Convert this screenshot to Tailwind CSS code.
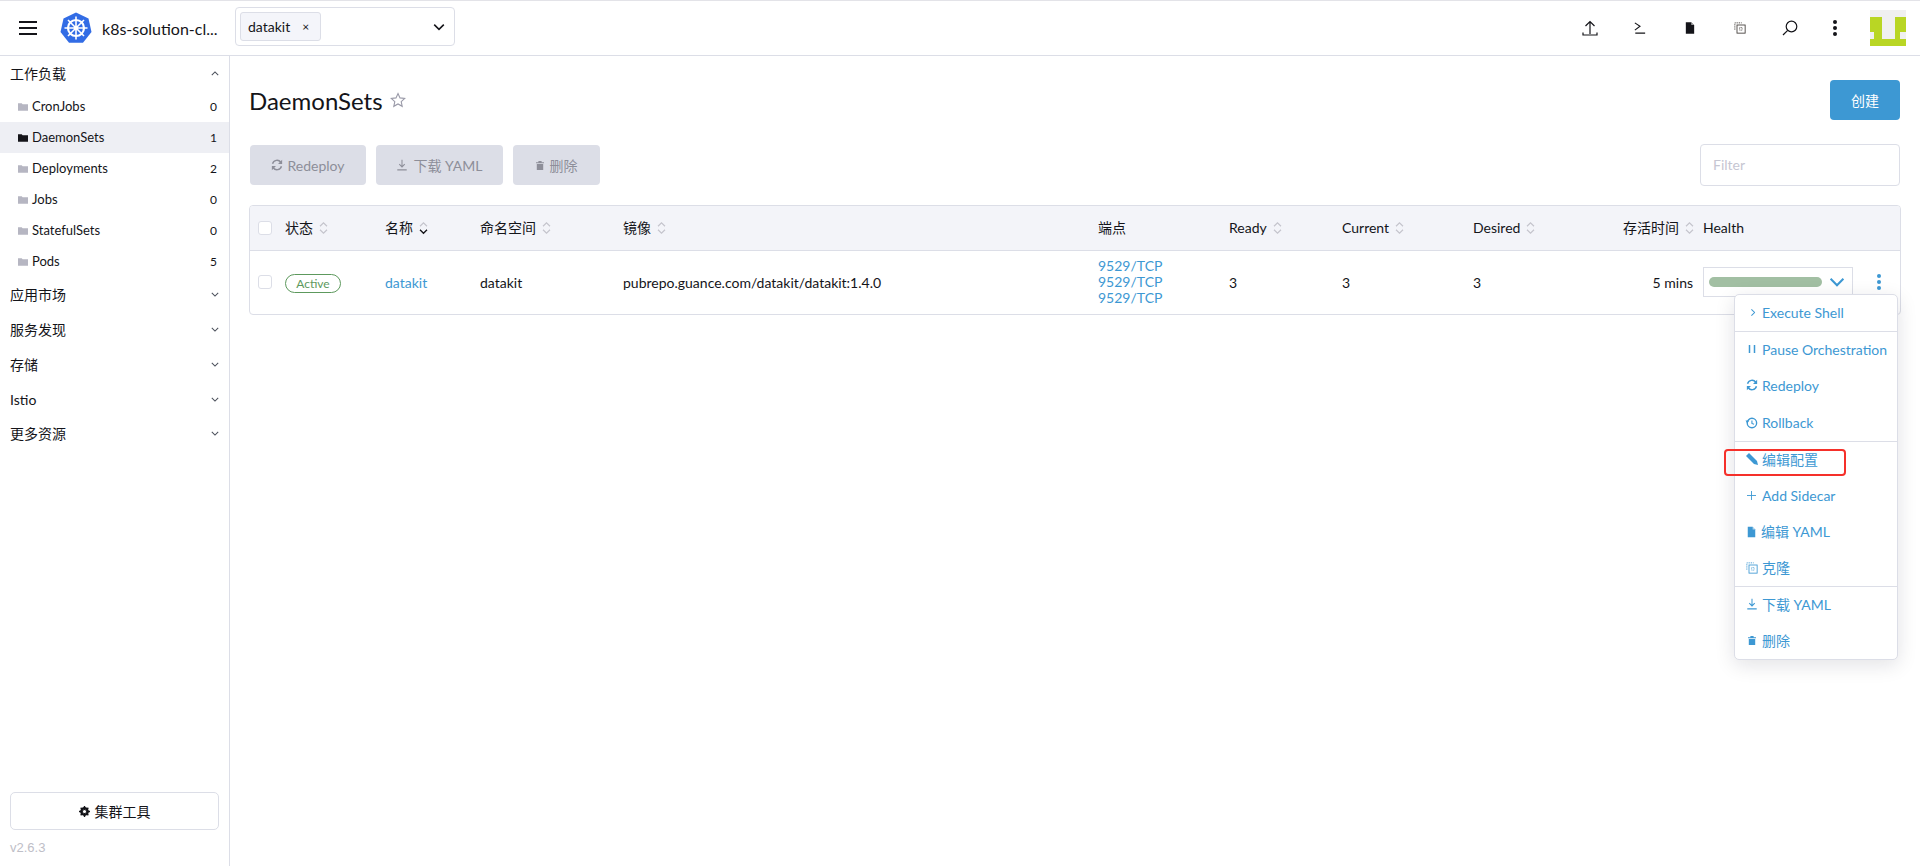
<!DOCTYPE html>
<html lang="en">
  <head>
    <meta charset="UTF-8" />
    <title>DaemonSets | Rancher</title>
    <script src="https://cdn.jsdelivr.net/npm/@tailwindcss/browser@4"></script>
  </head>
  <body class="relative w-[1920px] h-[866px] overflow-hidden bg-white text-[14px] leading-[21px] text-[#141419] font-['Lato','Noto_Sans_CJK_SC',sans-serif]">
    <svg class="hidden">
      <symbol id="sort" viewBox="0 0 10 16"><path d="M1 6l4-4 4 4M1 10l4 4 4-4" fill="none" stroke="currentColor" stroke-width="1.300"/></symbol>
      <symbol id="sort-down" viewBox="0 0 10 16"><path d="M1 6l4-4 4 4" fill="none" stroke="#c4c4cc" stroke-width="1.300"/><path d="M1 10l4 4 4-4" fill="none" stroke="#141419" stroke-width="1.500"/></symbol>
      <symbol id="folder" viewBox="0 0 12 10"><path d="M0 1h4.500l1 1.300H12V10H0z" fill="currentColor"/></symbol>
      <symbol id="chev-down" viewBox="0 0 10 6"><path d="M1 1l4 4 4-4" fill="none" stroke="currentColor" stroke-width="1.300"/></symbol>
      <symbol id="refresh" viewBox="0 0 14 14"><path d="M1.800 5.500A5.400 5.400 0 0 1 11.400 3.800M12.200 8.500A5.400 5.400 0 0 1 2.600 10.200" fill="none" stroke="currentColor" stroke-width="1.700"/><path d="M13 .8v5H8.200zM1 13.200v-5h4.800z" fill="currentColor"/></symbol>
      <symbol id="download" viewBox="0 0 14 14"><path d="M7 1v8M3.800 6L7 9.300 10.200 6M1.500 12.700h11" fill="none" stroke="currentColor" stroke-width="1.200"/></symbol>
      <symbol id="trash" viewBox="0 0 10 11"><path d="M0 1.500h10v1.300H0zM3 0h4v1.500H3zM1 3.500h8V11H1z" fill="currentColor"/></symbol>
      <symbol id="copy" viewBox="0 0 14 14"><path d="M1 9V1h8" fill="none" stroke="currentColor" stroke-width="1" stroke-dasharray="1.500 1"/><rect x="3.500" y="3.500" width="9.500" height="9.500" fill="none" stroke="currentColor" stroke-width="1"/><rect x="6.500" y="6.500" width="3" height="3" fill="none" stroke="currentColor" stroke-width="1" stroke-dasharray="1 1"/></symbol>
      <symbol id="file" viewBox="0 0 12 14"><path d="M1 0h6.500L11 3.500V14H1z" fill="currentColor"/><path d="M7.500 0v3.500H11" fill="#fff" fill-opacity=".6"/></symbol>
    </svg>

    <div class="h-[1px] bg-[#e3e3e8]"></div>
    <header class="flex items-center h-[55px] border-b border-[#dcdee7]">
      <div class="w-[60px] pl-[19px] flex flex-col gap-[4px]">
        <span class="w-[18px] h-[2px] bg-[#141419]"></span>
        <span class="w-[18px] h-[2px] bg-[#141419]"></span>
        <span class="w-[18px] h-[2px] bg-[#141419]"></span>
      </div>
      <svg class="w-[32px] h-[32px]" viewBox="0 0 32 32">
        <path d="M16 .500l12.500 6 3 13.500-8.500 10.800H9L.5 20l3-13.500z" fill="#326ce5"/>
        <g fill="none" stroke="#fff">
          <circle cx="16" cy="16" r="8" stroke-width="2.200"/>
          <circle cx="16" cy="16" r="1.800" fill="#fff"/>
          <path d="M16 4.500v23M4.500 16h23M8 8l16 16M24 8L8 24" stroke-width="1.600"/>
        </g>
      </svg>
      <div class="w-[143px] pl-[10px] text-[16px] whitespace-nowrap">k8s-solution-cl...</div>
      <div class="flex items-center justify-between self-start mt-[6px] w-[220px] h-[39px] px-[4px] border border-[#dcdee7] rounded-[4px]">
        <span class="flex items-center w-[81px] h-[29px] pl-[7px] gap-[12px] bg-[#f4f5fa] border border-[#dcdee7] rounded-[3px]">datakit <span class="text-[12px]">×</span></span>
        <svg class="w-[12px] h-[8px] mr-[5px] text-[#141419]"><use href="#chev-down"/></svg>
      </div>
      <div class="flex items-center ml-auto">
        <div class="flex items-center justify-center w-[50px]">
          <svg class="w-[16px] h-[16px]" viewBox="0 0 16 16"><path d="M8 14V2M3.500 6L8 1.500 12.500 6M1 12.500v2.500h14v-2.500" fill="none" stroke="#141419" stroke-width="1.200"/></svg>
        </div>
        <div class="flex items-center justify-center w-[50px]">
          <svg class="w-[12px] h-[12px]" viewBox="0 0 14 14"><path d="M1 1l6 4-6 4.500M1.500 13H13" fill="none" stroke="#141419" stroke-width="1.300"/></svg>
        </div>
        <div class="flex items-center justify-center w-[50px]">
          <svg class="w-[10px] h-[12px] text-[#141419]"><use href="#file"/></svg>
        </div>
        <div class="flex items-center justify-center w-[50px]">
          <svg class="w-[12px] h-[12px] text-[#3f3a36]"><use href="#copy"/></svg>
        </div>
        <div class="flex items-center justify-center w-[50px]">
          <svg class="w-[16px] h-[16px]" viewBox="0 0 16 16"><circle cx="9.500" cy="6.500" r="5.300" fill="none" stroke="#141419" stroke-width="1.200"/><path d="M5.700 10.300L1 15" stroke="#141419" stroke-width="1.200"/></svg>
        </div>
        <div class="flex flex-col items-center gap-[2px] w-[40px]">
          <span class="w-[4px] h-[4px] rounded-full bg-[#141419]"></span>
          <span class="w-[4px] h-[4px] rounded-full bg-[#141419]"></span>
          <span class="w-[4px] h-[4px] rounded-full bg-[#141419]"></span>
        </div>
        <svg class="w-[36px] h-[36px] ml-[15px] mr-[14px]" viewBox="0 0 36 36">
          <rect width="36" height="36" fill="#f0f0f0"/>
          <rect y="7" width="36" height="29" fill="#b9d624"/>
          <rect x="12" y="7" width="13" height="22" fill="#f0f0f0"/>
          <rect y="22" width="4" height="7" fill="#f0f0f0"/>
          <rect x="30" y="22" width="6" height="7" fill="#f0f0f0"/>
        </svg>
      </div>
    </header>

    <div class="flex h-[810px]">
      <aside class="flex flex-col w-[230px] border-r border-[#dcdee7]">
        <div class="flex items-center justify-between h-[35px] px-[10px]">
          <span>工作负载</span>
          <svg class="w-[8px] h-[5px] rotate-180 text-[#4a4f5a]"><use href="#chev-down"/></svg>
        </div>
        <ul class="text-[13px]">
          <li class="flex items-center h-[31px] pl-[18px] pr-[12px]"><svg class="w-[10px] h-[9px] mr-[4px] text-[#b6b6c2]"><use href="#folder"/></svg>CronJobs<span class="ml-auto text-[12px]">0</span></li>
          <li class="flex items-center h-[31px] pl-[18px] pr-[12px] bg-[#eeeff4]"><svg class="w-[10px] h-[9px] mr-[4px] text-[#141419]"><use href="#folder"/></svg>DaemonSets<span class="ml-auto text-[12px]">1</span></li>
          <li class="flex items-center h-[31px] pl-[18px] pr-[12px]"><svg class="w-[10px] h-[9px] mr-[4px] text-[#b6b6c2]"><use href="#folder"/></svg>Deployments<span class="ml-auto text-[12px]">2</span></li>
          <li class="flex items-center h-[31px] pl-[18px] pr-[12px]"><svg class="w-[10px] h-[9px] mr-[4px] text-[#b6b6c2]"><use href="#folder"/></svg>Jobs<span class="ml-auto text-[12px]">0</span></li>
          <li class="flex items-center h-[31px] pl-[18px] pr-[12px]"><svg class="w-[10px] h-[9px] mr-[4px] text-[#b6b6c2]"><use href="#folder"/></svg>StatefulSets<span class="ml-auto text-[12px]">0</span></li>
          <li class="flex items-center h-[31px] pl-[18px] pr-[12px]"><svg class="w-[10px] h-[9px] mr-[4px] text-[#b6b6c2]"><use href="#folder"/></svg>Pods<span class="ml-auto text-[12px]">5</span></li>
        </ul>
        <div class="flex items-center justify-between h-[35px] px-[10px]"><span>应用市场</span><svg class="w-[8px] h-[5px] text-[#4a4f5a]"><use href="#chev-down"/></svg></div>
        <div class="flex items-center justify-between h-[35px] px-[10px]"><span>服务发现</span><svg class="w-[8px] h-[5px] text-[#4a4f5a]"><use href="#chev-down"/></svg></div>
        <div class="flex items-center justify-between h-[35px] px-[10px]"><span>存储</span><svg class="w-[8px] h-[5px] text-[#4a4f5a]"><use href="#chev-down"/></svg></div>
        <div class="flex items-center justify-between h-[35px] px-[10px]"><span>Istio</span><svg class="w-[8px] h-[5px] text-[#4a4f5a]"><use href="#chev-down"/></svg></div>
        <div class="flex items-center justify-between h-[33px] px-[10px]"><span>更多资源</span><svg class="w-[8px] h-[5px] text-[#4a4f5a]"><use href="#chev-down"/></svg></div>
        <div class="mt-auto px-[10px] pb-[8px]">
          <div class="flex items-center justify-center gap-[5px] h-[38px] border border-[#dcdee7] rounded-[5px]">
            <svg class="w-[11px] h-[11px]" viewBox="0 0 12 12"><circle cx="6" cy="6" r="3.600" fill="none" stroke="#141419" stroke-width="2.400"/><path d="M6 0v12M0 6h12M1.800 1.800l8.400 8.400M10.200 1.800l-8.400 8.400" stroke="#141419" stroke-width="1.500"/><circle cx="6" cy="6" r="1.700" fill="#fff"/></svg>
            <span>集群工具</span>
          </div>
          <div class="mt-[8px] text-[13px] leading-[20px] text-[#bebec7] font-['Liberation_Sans',sans-serif]">v2.6.3</div>
        </div>
      </aside>

      <main class="flex-1 pl-[19px] pr-[19px] pt-[24px]">
        <div class="flex items-start justify-between h-[64px]">
          <div class="flex items-center gap-[7px] h-[40px]">
            <h1 class="text-[24px] font-normal">DaemonSets</h1>
            <svg class="w-[16px] h-[16px]" viewBox="0 0 16 16"><path d="M8 1.500l2 4.400 4.700.5-3.500 3.200 1 4.700L8 11.900l-4.200 2.400 1-4.700L1.300 6.400 6 5.900z" fill="none" stroke="#9a9aa8" stroke-width="1.100"/></svg>
          </div>
          <div class="flex items-center justify-center w-[70px] h-[40px] mr-[1px] bg-[#3d98d3] text-white rounded-[4px]">创建</div>
        </div>
        <div class="flex items-center justify-between h-[42px]">
          <div class="flex gap-[10px] ml-[1px] text-[#8d8e99]">
            <div class="flex items-center justify-center gap-[4px] w-[116px] h-[40px] bg-[#dcdee7] rounded-[4px]"><svg class="w-[12px] h-[12px]"><use href="#refresh"/></svg>Redeploy</div>
            <div class="flex items-center justify-center gap-[5px] w-[127px] h-[40px] bg-[#dcdee7] rounded-[4px]"><svg class="w-[12px] h-[12px]"><use href="#download"/></svg>下载 YAML</div>
            <div class="flex items-center justify-center gap-[6px] w-[87px] h-[40px] bg-[#dcdee7] rounded-[4px]"><svg class="w-[8px] h-[9px]"><use href="#trash"/></svg>删除</div>
          </div>
          <div class="flex items-center w-[200px] h-[42px] mr-[1px] pl-[12px] pb-[2px] border border-[#dcdee7] rounded-[4px] text-[#c6c6d2]">Filter</div>
        </div>

        <div class="mt-[19px] w-[1652px] border border-[#dcdee7] rounded-[4px] overflow-hidden">
          <table class="w-full table-fixed border-collapse">
            <colgroup>
              <col class="w-[35px]" /><col class="w-[100px]" /><col class="w-[95px]" /><col class="w-[143px]" /><col class="w-[475px]" /><col class="w-[131px]" /><col class="w-[113px]" /><col class="w-[131px]" /><col class="w-[104px]" /><col class="w-[126px]" /><col />
            </colgroup>
            <thead class="bg-[#f3f4f9]">
              <tr class="h-[44px] text-left border-b border-[#dcdee7]">
                <th class="pl-[8px] font-normal"><span class="block w-[14px] h-[14px] bg-white border border-[#dcdee7] rounded-[3px]"></span></th>
                <th class="font-normal"><span class="flex items-center gap-[6px]">状态<svg class="w-[9px] h-[14px] text-[#c4c4cc]"><use href="#sort"/></svg></span></th>
                <th class="font-normal"><span class="flex items-center gap-[6px]">名称<svg class="w-[9px] h-[14px]"><use href="#sort-down"/></svg></span></th>
                <th class="font-normal"><span class="flex items-center gap-[6px]">命名空间<svg class="w-[9px] h-[14px] text-[#c4c4cc]"><use href="#sort"/></svg></span></th>
                <th class="font-normal"><span class="flex items-center gap-[6px]">镜像<svg class="w-[9px] h-[14px] text-[#c4c4cc]"><use href="#sort"/></svg></span></th>
                <th class="font-normal">端点</th>
                <th class="font-normal"><span class="flex items-center gap-[6px]">Ready<svg class="w-[9px] h-[14px] text-[#c4c4cc]"><use href="#sort"/></svg></span></th>
                <th class="font-normal"><span class="flex items-center gap-[6px]">Current<svg class="w-[9px] h-[14px] text-[#c4c4cc]"><use href="#sort"/></svg></span></th>
                <th class="font-normal"><span class="flex items-center gap-[6px]">Desired<svg class="w-[9px] h-[14px] text-[#c4c4cc]"><use href="#sort"/></svg></span></th>
                <th class="font-normal"><span class="flex items-center justify-end gap-[6px] pr-[9px]">存活时间<svg class="w-[9px] h-[14px] text-[#c4c4cc]"><use href="#sort"/></svg></span></th>
                <th class="font-normal">Health</th>
              </tr>
            </thead>
            <tbody>
              <tr class="h-[64px]">
                <td class="pl-[8px]"><span class="block w-[14px] h-[14px] border border-[#dcdee7] rounded-[3px]"></span></td>
                <td><span class="inline-flex items-center justify-center w-[56px] h-[19px] border border-[#5d995d] rounded-full text-[12px] text-[#5d995d]">Active</span></td>
                <td class="text-[#3d98d3]">datakit</td>
                <td>datakit</td>
                <td>pubrepo.guance.com/datakit/datakit:1.4.0</td>
                <td class="text-[#3d98d3] leading-[16px]">9529/TCP<br />9529/TCP<br />9529/TCP</td>
                <td>3</td>
                <td>3</td>
                <td>3</td>
                <td class="text-right pr-[10px]">5 mins</td>
                <td>
                  <div class="flex items-center">
                    <div class="flex items-center w-[150px] h-[30px] pl-[5px] border border-[#dcdee7]">
                      <span class="w-[113px] h-[10px] bg-[#a2bfa3] rounded-full"></span>
                      <svg class="w-[16px] h-[10px] ml-[7px] text-[#3d98d3]"><use href="#chev-down"/></svg>
                    </div>
                    <div class="flex flex-col items-center gap-[2px] ml-[24px]">
                      <span class="w-[4px] h-[4px] rounded-full bg-[#3d98d3]"></span>
                      <span class="w-[4px] h-[4px] rounded-full bg-[#3d98d3]"></span>
                      <span class="w-[4px] h-[4px] rounded-full bg-[#3d98d3]"></span>
                    </div>
                  </div>
                </td>
              </tr>
            </tbody>
          </table>
        </div>
      </main>
    </div>

    <!-- row action menu, sits over the table -->
    <div class="absolute left-[1734px] top-[294px] w-[164px] h-[366px] bg-white border border-[#dcdee7] rounded-[5px] shadow-[0_5px_20px_rgba(20,20,40,0.12)] text-[#3d98d3]">
      <div class="flex items-center h-[36px] pb-[2px] pl-[14px]"><svg class="w-[8px] h-[5px] mr-[5px] -rotate-90"><use href="#chev-down"/></svg>Execute Shell</div>
      <div class="border-t border-[#dcdee7]"></div>
      <div class="flex items-center h-[36px] pb-[2px] pl-[13px]"><svg class="w-[8px] h-[8px] mr-[6px]" viewBox="0 0 8 8"><path d="M1.500 0v8M6.500 0v8" fill="none" stroke="currentColor" stroke-width="1.500"/></svg>Pause Orchestration</div>
      <div class="flex items-center h-[36px] pb-[2px] pl-[11px]"><svg class="w-[12px] h-[12px] mr-[4px]"><use href="#refresh"/></svg>Redeploy</div>
      <div class="flex items-center h-[37px] pl-[10px]"><svg class="w-[13px] h-[12px] mr-[4px]" viewBox="0 0 14 14"><circle cx="7.500" cy="7" r="5.500" fill="none" stroke="currentColor" stroke-width="1.600"/><path d="M7.500 4v3.500l2.500 1" fill="none" stroke="currentColor" stroke-width="1.300"/><path d="M0 4h4.500L2 7.500z" fill="currentColor"/></svg>Rollback</div>
      <div class="border-t border-[#dcdee7]"></div>
      <div class="flex items-center h-[36px] pb-[2px] pl-[11px]"><svg class="w-[12px] h-[12px] mr-[4px]" viewBox="0 0 12 12"><path d="M3 0L0 3l8 8 4 1-1-4z" fill="currentColor"/></svg>编辑配置</div>
      <div class="flex items-center h-[36px] pb-[2px] pl-[12px]"><svg class="w-[9px] h-[9px] mr-[6px]" viewBox="0 0 10 10"><path d="M5 0v10M0 5h10" stroke="currentColor" stroke-width="1"/></svg>Add Sidecar</div>
      <div class="flex items-center h-[37px] pb-[2px] pl-[12px]"><svg class="w-[9px] h-[12px] mr-[5px]"><use href="#file"/></svg>编辑 YAML</div>
      <div class="flex items-center h-[35px] pb-[2px] pl-[11px]"><svg class="w-[12px] h-[12px] mr-[4px]"><use href="#copy"/></svg>克隆</div>
      <div class="border-t border-[#dcdee7]"></div>
      <div class="flex items-center h-[36px] pb-[2px] pl-[11px]"><svg class="w-[12px] h-[12px] mr-[4px]"><use href="#download"/></svg>下载 YAML</div>
      <div class="flex items-center h-[36px] pb-[2px] pl-[13px]"><svg class="w-[8px] h-[9px] mr-[6px]"><use href="#trash"/></svg>删除</div>
    </div>
    <!-- red annotation box drawn on the screenshot -->
    <div class="absolute left-[1724px] top-[449px] w-[122px] h-[27px] border-2 border-[#f5302a] rounded-[4px]"></div>
  </body>
</html>
